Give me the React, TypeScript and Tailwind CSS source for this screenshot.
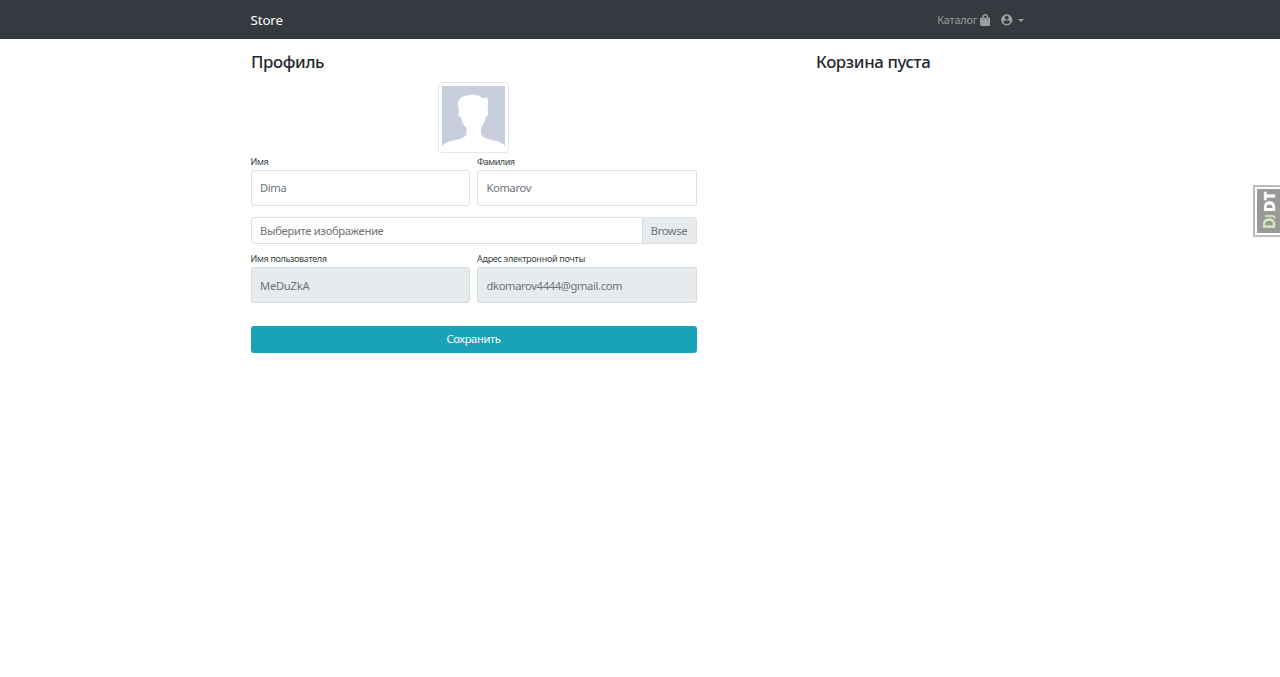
import type { ReactNode } from "react";

type FieldProps = { label: ReactNode; value: string; tracking: string; disabled?: boolean };

function Field({ label, value, tracking, disabled = false }: FieldProps) {
  return (
    <div className="flex min-w-0 flex-1 flex-col">
      <label className="h-[17px] text-[9px] leading-[17px] whitespace-nowrap text-[#3a3f44]">{label}</label>
      <div
        className={`flex h-[36px] items-center rounded-[3px] border px-[8.5px] text-[11.2px] text-[#6c737a] ${
          disabled ? "border-[#d5dade] bg-[#e7ebee] pt-[2.5px]" : "border-[#dce0e3] bg-white pt-px"
        }`}
      >
        <span className={tracking}>{value}</span>
      </div>
    </div>
  );
}

function Avatar() {
  return (
    <div className="h-[71px] w-[71px] rounded-[3px] border border-[#e6e9eb] bg-white p-[3px]">
      <svg viewBox="0 0 63 63" className="block h-[63px] w-[63px]" aria-hidden="true">
        <rect width="63" height="63" fill="#c9cede" />
        <path
          fill="#fff"
          d="M0 63V60C2 57 8 55 14 54C21 52 24 51 24.500 47V42C21 39 19.500 35 19 31C16.500 31 16 28 16.500 25.500C17.500 24 16 21 16 18C16 12 21 9.500 27 9.200C33 8 38 9.500 41 12.500L46 11L44.500 13.500L46.500 13.200C45.500 17 46 20 45.500 24C47 26 46 31 43.500 31C43 36 41 39 39 42V47C39.500 51 44 52.500 50 54C56 55 61 57 63 60V63Z"
        />
      </svg>
    </div>
  );
}

function BagIcon() {
  return (
    <svg viewBox="0 0 448 512" className="h-[12px] w-[10.5px]" fill="currentColor" aria-hidden="true">
      <path d="M352 160v-32C352 57.420 294.579 0 224 0 153.420 0 96 57.420 96 128v32H0v272c0 44.183 35.817 80 80 80h288c44.183 0 80-35.817 80-80V160h-96zm-192-32c0-35.290 28.710-64 64-64s64 28.710 64 64v32H160v-32zm160 120c-13.255 0-24-10.745-24-24s10.745-24 24-24 24 10.745 24 24-10.745 24-24 24zm-192 0c-13.255 0-24-10.745-24-24s10.745-24 24-24 24 10.745 24 24-10.745 24-24 24z" />
    </svg>
  );
}

function UserIcon() {
  return (
    <svg viewBox="0 0 24 24" className="h-[13.500px] w-[13.500px]" fill="currentColor" aria-hidden="true">
      <path d="M12 2C6.480 2 2 6.480 2 12s4.480 10 10 10 10-4.480 10-10S17.520 2 12 2zm0 3c1.900 0 3.400 1.500 3.400 3.400s-1.500 3.400-3.400 3.400-3.400-1.500-3.400-3.400S10.100 5 12 5zM6 16.500c.5-2.100 2-3.100 3.800-3.100h4.400c1.800 0 3.300 1 3.800 3.100-1.400 1.800-3.600 2.900-6 2.900s-4.600-1.100-6-2.900z" />
    </svg>
  );
}

export default function App() {
  return (
    <div className="relative min-h-[677px] overflow-hidden bg-white font-['Noto_Sans','Open_Sans',sans-serif] text-[#24292e]">
      <nav className="flex h-[39px] items-center justify-between bg-[#353a40] pr-[256px] pl-[250.5px]">
        <a className="pt-[2px] text-[13.3px] tracking-[-0.1px] text-white">Store</a>
        <div className="flex items-center pt-px text-[#9b9da0]">
          <span className="text-[10.8px] tracking-[-0.1px]">Каталог</span>
          <span className="-mt-px ml-[2px]"><BagIcon /></span>
          <span className="-mt-px ml-[10px]"><UserIcon /></span>
          <span className="ml-[4.5px] border-x-[3px] border-t-[3px] border-x-transparent border-t-current" />
        </div>
      </nav>

      <main className="flex pl-[250.5px]">
        <section className="w-[446px]">
          <h1 className="mt-[11px] h-[24px] pl-[0.5px] text-[16.8px] leading-[23px] font-medium tracking-[-0.38px]">Профиль</h1>
          <div className="mt-[8px] flex justify-center pr-px"><Avatar /></div>
          <div className="flex gap-[7px]">
            <Field label={<span className="tracking-[-0.4px]">Имя</span>} value="Dima" tracking="tracking-[-0.35px]" />
            <Field label={<span className="tracking-[-0.5px]">Фамилия</span>} value="Komarov" tracking="tracking-[-0.35px]" />
          </div>
          <div className="mt-[11px] flex h-[27px] overflow-hidden rounded-[3px] border border-[#dce0e3] text-[11.2px] tracking-[-0.3px] text-[#6c737a]">
            <div className="flex flex-1 items-center pt-px pl-[8.5px]">Выберите изображение</div>
            <div className="flex w-[54px] items-center justify-center border-l border-[#d5dade] bg-[#e7ebee] pt-px"><span className="tracking-[-0.4px]">Browse</span></div>
          </div>
          <div className="mt-[6px] flex gap-[7px]">
            <Field label={<span className="tracking-[-0.34px]">Имя пользователя</span>} value="MeDuZkA" tracking="tracking-[-0.25px]" disabled />
            <Field label={<span className="tracking-[-0.27px]">Адрес электронной почты</span>} value="dkomarov4444@gmail.com" tracking="tracking-[-0.36px]" disabled />
          </div>
          <button className="mt-[22.5px] flex h-[27px] w-full items-center justify-center rounded-[3px] bg-[#19a2b8] pt-px text-[11.2px] tracking-[-0.38px] text-white">
            Сохранить
          </button>
        </section>
        <aside className="ml-[119.5px]">
          <h2 className="mt-[11px] h-[24px] text-[16.8px] leading-[23px] font-medium tracking-[-0.36px]">Корзина пуста</h2>
        </aside>
      </main>

      <div className="absolute top-[185px] right-0 h-[52px] w-[27px] border-y-2 border-l-2 border-[#bbb] bg-white py-[2px] pl-[2px]">
        <div className="flex h-full w-full items-center justify-center bg-[#999]">
          <span className="flex rotate-180 items-center font-['Open_Sans',sans-serif] text-[16px] leading-none font-bold tracking-[-0.3px] whitespace-nowrap text-white [writing-mode:vertical-rl]">
            <span className="text-[#d5ebc0]">D<span className="text-[10px]">J</span></span>
            <span className="mt-[2px] font-extrabold">DT</span>
          </span>
        </div>
      </div>
    </div>
  );
}
